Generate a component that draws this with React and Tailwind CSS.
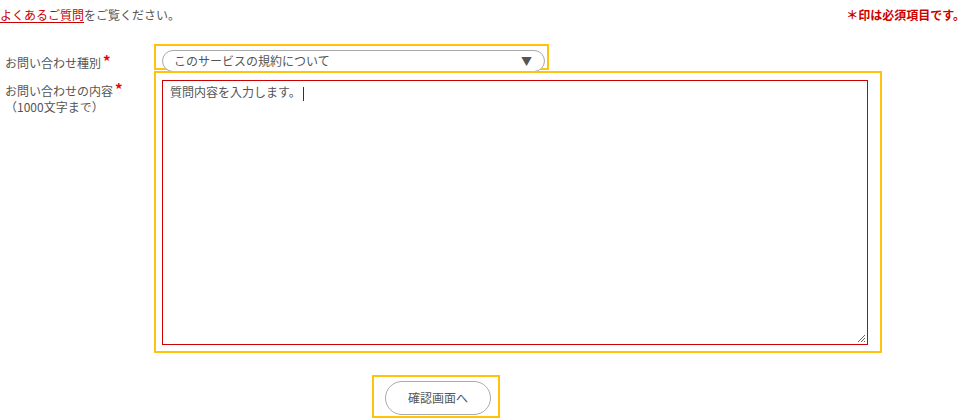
export default function App() {
  return (
    <div className="w-[969px] h-[420px] bg-white text-[12px] text-[#555] font-['Noto_Sans_CJK_JP','Noto_Sans',sans-serif] leading-none overflow-hidden">
      <div className="flex justify-between items-start h-[44px] pt-[8px] pr-[4px]">
        <p className="leading-[14px]">
          <a className="text-[#c00] underline underline-offset-2">よくあるご質問</a>をご覧ください。
        </p>
        <p className="text-[#c00] font-bold leading-[14px]">＊印は必須項目です。</p>
      </div>

      <div className="flex">
        <div className="w-[154px] pl-[5px] pt-[10px]">
          お問い合わせ種別<span className="text-[#e00] text-[15px] font-bold relative -top-[1px] ml-[2px]">*</span>
        </div>
        <div className="w-[395px] h-[26px] border-2 border-[#ffc20e] pl-[6px] pt-[4px]">
          <div className="w-[383px] h-[22px] rounded-full border border-[#aaa] bg-white flex items-center justify-between pl-[11px] pr-[12px]">
            <span>このサービスの規約について</span>
            <span className="text-[#555] text-[11px]">▼</span>
          </div>
        </div>
      </div>

      <div className="flex mt-[1px]">
        <div className="w-[154px] pl-[5px] pt-[11px]">
          <div>
            お問い合わせの内容<span className="text-[#e00] text-[15px] font-bold relative -top-[1px] ml-[2px]">*</span>
          </div>
          <div className="mt-[4px]">（1000文字まで）</div>
        </div>
        <div className="w-[728px] h-[282px] border-2 border-[#ffc20e] pl-[6px] pt-[7px]">
          <div className="relative w-[706px] h-[265px] border border-[#c00] bg-white px-[7px] pt-[2px]">
            <span className="leading-[18px]">質問内容を入力します。</span>
            <span className="inline-block w-px h-[14px] bg-[#333] align-middle ml-[2px]" />
            <svg className="absolute right-[1px] bottom-[1px]" width="9" height="9" viewBox="0 0 9 9">
              <path d="M8 1L1 8M8 4L4 8M8 7L7 8" stroke="#666" strokeWidth="1" />
            </svg>
          </div>
        </div>
      </div>

      <div className="flex justify-start pl-[372px] mt-[22px]">
        <div className="w-[128px] h-[43px] border-2 border-[#ffc20e] pl-[11px] pt-[4px]">
          <button className="w-[106px] h-[34px] rounded-full border border-[#aaa] bg-white text-[#555] text-[12px]">
            確認画面へ
          </button>
        </div>
      </div>
    </div>
  )
}
